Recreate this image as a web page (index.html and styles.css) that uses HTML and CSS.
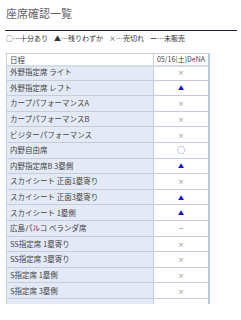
FILE: index.html
```html
<!DOCTYPE html>
<html lang="ja">
<head>
<meta charset="utf-8">
<link rel="stylesheet" href="styles.css">
</head>
<body>
<div class="page">
  <h1 class="title">座席確認一覧</h1>
  <p class="legend"><span>○…十分あり</span><span>▲…残りわずか</span><span>×…売切れ</span><span>ー…未販売</span></p>
  <div class="box">
    <table class="head">
      <tr><th class="name">日程</th><th class="val">05/16(土)DeNA</th></tr>
    </table>
    <div class="scroll">
      <table class="body">
        <tr><td class="name">外野指定席 ライト</td><td class="val"><span class="x">×</span></td></tr>
        <tr><td class="name">外野指定席 レフト</td><td class="val"><span class="tri">▲</span></td></tr>
        <tr><td class="name">カープパフォーマンスA</td><td class="val"><span class="x">×</span></td></tr>
        <tr><td class="name">カープパフォーマンスB</td><td class="val"><span class="x">×</span></td></tr>
        <tr><td class="name">ビジターパフォーマンス</td><td class="val"><span class="x">×</span></td></tr>
        <tr><td class="name">内野自由席</td><td class="val"><span class="circ">○</span></td></tr>
        <tr><td class="name">内野指定席B 3塁側</td><td class="val"><span class="tri">▲</span></td></tr>
        <tr><td class="name">スカイシート 正面1塁寄り</td><td class="val"><span class="x">×</span></td></tr>
        <tr><td class="name">スカイシート 正面3塁寄り</td><td class="val"><span class="tri">▲</span></td></tr>
        <tr><td class="name">スカイシート 1塁側</td><td class="val"><span class="tri">▲</span></td></tr>
        <tr><td class="name">広島パルコ ベランダ席</td><td class="val"><span class="dash">−</span></td></tr>
        <tr><td class="name">SS指定席 1塁寄り</td><td class="val"><span class="x">×</span></td></tr>
        <tr><td class="name">SS指定席 3塁寄り</td><td class="val"><span class="x">×</span></td></tr>
        <tr><td class="name">S指定席 1塁側</td><td class="val"><span class="x">×</span></td></tr>
        <tr><td class="name">S指定席 3塁側</td><td class="val"><span class="x">×</span></td></tr>
        <tr><td class="name"> </td><td class="val"> </td></tr>
      </table>
    </div>
  </div>
</div>
</body>
</html>
```
FILE: styles.css
```css
html, body {
  margin: 0;
  padding: 0;
  background: #fff;
}
body {
  font-family: "Noto Sans CJK JP", "Noto Sans", sans-serif;
  color: #444;
}
.page {
  padding: 0 0 0 6px;
}
.title {
  margin: 0 4px 0 -1px;
  padding: 6px 0 10px 1px;
  font-size: 11px;
  line-height: 14px;
  font-weight: normal;
  color: #666;
  border-bottom: 1.5px solid #1c1c40;
}
.legend {
  margin: 2px 0 0;
  font-size: 7px;
  line-height: 10px;
  color: #333;
  display: flex;
  gap: 6px;
  white-space: nowrap;
}
.box {
  margin-top: 10px;
  width: 204px;
  border-right: 2px solid #b9c9dc;
  border-top: 1px solid #c8d0dc;
  border-left: 1px solid #c8d0dc;
  box-sizing: border-box;
}
table {
  border-collapse: collapse;
  width: 100%;
  table-layout: fixed;
  font-size: 7.5px;
}
.name {
  width: 143px;
  text-align: left;
  padding: 0 0 0 3px;
}
.val {
  text-align: center;
  padding: 0;
  white-space: nowrap;
}
.head th {
  font-weight: normal;
  height: 11px;
  line-height: 11px;
  background: #fff;
  color: #444;
  border-bottom: 2px solid #d6dde8;
}
.head th.val {
  font-size: 7px;
}
.head th.name {
  border-right: 1px solid #c8d0dc;
}
.scroll {
  height: 237px;
  overflow: hidden;
}
.body {
  margin-top: -2px;
}
.body td {
  height: 14.6px;
  line-height: 10px;
  border-bottom: 1px solid #c3cddb;
}
.body td.name {
  background: #e3eaf5;
  border-right: 1px solid #c3cddb;
  color: #444;
}
.body td.val {
  background: #fff;
}
.x {
  font-size: 6.5px;
  color: #888;
}
.tri {
  font-size: 6px;
  color: #1010d0;
}
.circ {
  font-size: 8px;
  color: #3a4ad0;
}
.dash {
  font-size: 8px;
  color: #888;
}
```
